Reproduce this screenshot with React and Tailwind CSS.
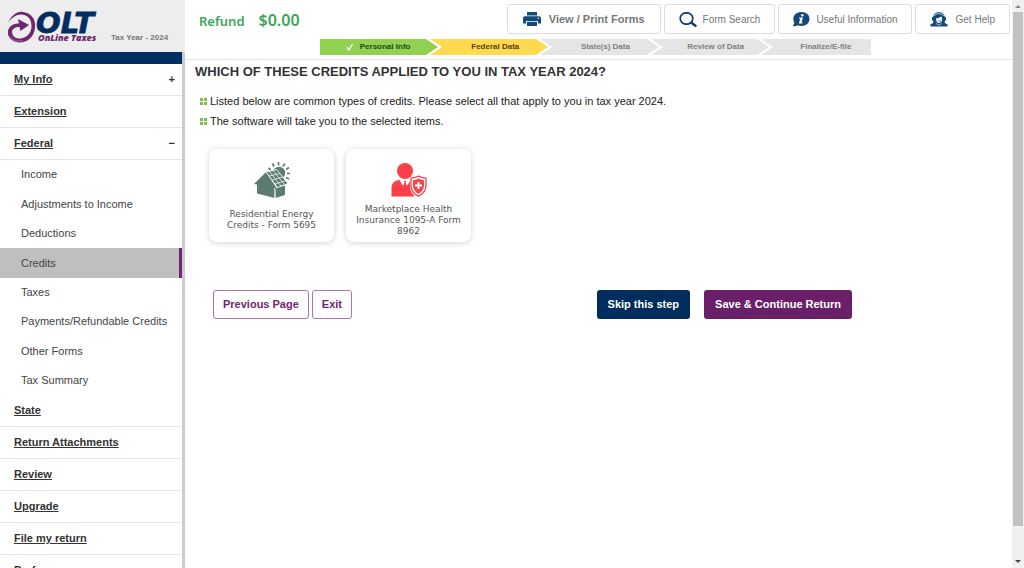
import React, { useState } from 'react';
import clsx from 'clsx';

const federalItems = [
  'Income',
  'Adjustments to Income',
  'Deductions',
  'Credits',
  'Taxes',
  'Payments/Refundable Credits',
  'Other Forms',
  'Tax Summary',
];

const lowerSections = [
  'State',
  'Return Attachments',
  'Review',
  'Upgrade',
  'File my return',
  'Preferences',
];

const steps = [
  { label: 'Personal Info', state: 'done' },
  { label: 'Federal Data', state: 'current' },
  { label: 'State(s) Data', state: 'todo' },
  { label: 'Review of Data', state: 'todo' },
  { label: 'Finalize/E-file', state: 'todo' },
];

const stepColors = {
  done: 'bg-[#92d050] text-[#1f4a1c] pl-1.5',
  current: 'bg-[#ffd94f] text-[#5a4300] pl-5',
  todo: 'bg-[#e5e5e5] text-[#808080] pl-5',
};

const stepFills = { done: '#92d050', current: '#ffd94f', todo: '#e5e5e5' };

/* Logo */
function Logo() {
  return (
    <svg viewBox="0 -6 96 44" className="w-24 h-11 shrink-0" role="img" aria-label="OLT OnLine Taxes">
      <path
        d="M1 13C5 4 11 1 16 2C25 3 29 10 28 18C27 28 19 33 12 32.5C5 32 0 27 1 21C2 16 6 13.5 12 13.5L11 9L22 15L13.5 21L12.5 17C8 17 5 19 5 22C5 26 9 29 13 28.5C19 28 24 24 24.5 17C25 10 21 5 15 4.5C10 4 5 7 1 13Z"
        fill="#702670"
      />
      <path d="M2.500 26C5 30.500 11 32 16 30.500" fill="none" stroke="#b784b6" strokeWidth="0.7" />
      <text x="29" y="23" fontFamily="DejaVu Sans, sans-serif" fontSize="29" fontWeight="700" fontStyle="italic" fill="#002d62" stroke="#002d62" strokeWidth="0.8">
        OLT
      </text>
      <text x="31" y="31" fontFamily="Open Sans, sans-serif" fontSize="9" fontWeight="800" fontStyle="italic" fill="#702670">
        OnLine Taxes
      </text>
    </svg>
  );
}

/* Toolbar icons */
function PrinterIcon() {
  return (
    <svg viewBox="0 0 18 14" className="w-[18px] h-[14px]" aria-hidden="true">
      <path
        fill="#134a7c"
        fillRule="evenodd"
        d="M4 0h10v3.400H4z M2 4.200h14A2 2 0 0 1 18 6.200V11.500h-3V9H3v2.500H0V6.200A2 2 0 0 1 2 4.200z M15.300 5.500a.7.7 0 1 0 0 1.400a.7.7 0 0 0 0-1.400z M4 9.800h10V14H4z"
      />
    </svg>
  );
}

function SearchIcon() {
  return (
    <svg viewBox="0 0 18 15" className="w-[18px] h-[15px]" fill="none" stroke="#12386b" aria-hidden="true">
      <ellipse cx="7.5" cy="6.5" rx="6.3" ry="5.7" strokeWidth="1.7" />
      <path d="M12.3 10.8L16.500 13.700" strokeWidth="2.400" strokeLinecap="round" />
    </svg>
  );
}

function InfoIcon() {
  return (
    <svg viewBox="0 0 18 15" className="w-[18px] h-[15px]" aria-hidden="true">
      <path fill="#134a7c" d="M9.5 0C14.5 0 17.5 3.2 17.5 7C17.5 11 14 14 9.5 14C8 14 6.8 13.7 5.8 13.2C4.5 14 2.5 14.4 0.5 14.2C1.5 13.2 2.2 12 2.3 10.7C1.6 9.6 1.3 8.4 1.3 7C1.3 3.2 4.5 0 9.5 0Z" />
      <circle cx="10.3" cy="3.2" r="1.3" fill="#fff" />
      <path fill="#fff" d="M7.3 5.6h3.600l-1.300 4.700h1l-.3 1.200H6.900l1.300-4.700h-1.200z" />
    </svg>
  );
}

function HelpIcon() {
  return (
    <svg viewBox="0 0 18 15" className="w-[18px] h-[15px]" aria-hidden="true">
      <path fill="#134a7c" d="M3.2 6C3.2 2.3 5.7 0.300 9 0.300S14.800 2.300 14.800 6V11L17.500 12.300V14.500H0.500V12.300L3.200 11Z" />
      <path fill="none" stroke="#fff" strokeWidth="0.700" d="M4.300 4C5.200 2.200 7 1.600 9 1.600s3.800.6 4.700 2.400" />
      <path fill="#fff" d="M6 6.200C8.500 6.500 10.500 5.500 11 4.300L12.200 6.400C12.200 9.200 11 10.900 9 10.900S6 9.200 6 6.200Z" />
      <path fill="#134a7c" d="M8.500 8.700h2.500v.8H8.500z" />
      <path fill="none" stroke="#fff" strokeWidth="0.600" d="M6 11.500L9 13.200L12 11.500" />
      <rect x="2" y="4.800" width="2" height="4" rx="1" fill="#134a7c" />
      <rect x="14" y="4.800" width="2" height="4" rx="1" fill="#134a7c" />
    </svg>
  );
}

/* Card icons */
function SolarHouseIcon() {
  return (
    <svg viewBox="0 0 36 36" className="size-9 shrink-0" aria-hidden="true">
      <path
        d="M24.5 3.500V0M20 4.500L18.500 1.500M16.800 7.800L14.500 6M29 4.500L30.800 1.500M32 7.500L35 5.500M33 11.500H36M32 15.500L35 17"
        stroke="#5c7b72"
        strokeWidth="1.700"
      />
      <circle cx="25" cy="11" r="6.200" fill="#5c7b72" />
      {/* walls and gable */}
      <path d="M0 22L12 10L22 25L20.500 36L3 31.500V22.500Z" fill="#5c7b72" />
      <path d="M21.500 26L31 23.500V33L21.500 36Z" fill="#5c7b72" />
      {/* roof with panels */}
      <path d="M12 10L22.500 7.500L34 21.500L23.500 25.500Z" fill="#5c7b72" stroke="#fff" strokeWidth="0.900" />
      <path d="M15.500 9.500L27 24M19 8.500L30.500 22.500M15 14L26 11.500M18 18L29 15M21 22L32 18.500" stroke="#fff" strokeWidth="0.700" />
      <path d="M20.800 26V36" stroke="#fff" strokeWidth="0.900" />
    </svg>
  );
}

function HealthInsuranceIcon() {
  return (
    <svg viewBox="0 0 36 36" className="size-9 shrink-0" aria-hidden="true">
      <circle cx="14" cy="9" r="8" fill="#fa4048" />
      <path fill="#fa4048" d="M0.5 34.5V26C0.500 21 3.500 18.500 8.500 18L12 24L13.500 20.500L12.800 18.800H15.200L14.500 20.500L16 24L19.500 18C21 18.200 22 18.500 23 19L23 34.500Z" />
      <path fill="#fff" d="M27.500 13L36 16V24C36 30 32.500 34 27.500 36C22.500 34 19 30 19 24V16.500Z" />
      <path fill="none" stroke="#fa4048" strokeWidth="1.300" d="M27.500 14.200C30 15.500 32.500 16.200 35 16.200V23.500C35 28.500 32 32 27.500 34.200C23 32 20 28.500 20 23.500V16.200C22.500 16.200 25 15.500 27.500 14.200Z" />
      <path fill="#fa4048" d="M27.500 16.500C29.500 17.600 31.200 18.100 33 18.300V23.500C33 27.200 31 30 27.500 31.900C24 30 22 27.200 22 23.500V18.300C23.800 18.100 25.500 17.600 27.500 16.500Z" />
      <path d="M27.500 20V27M24 23.500H31" stroke="#fff" strokeWidth="2" />
    </svg>
  );
}

const credits = [
  { label: 'Residential Energy Credits - Form 5695', icon: SolarHouseIcon },
  { label: 'Marketplace Health Insurance 1095-A Form 8962', icon: HealthInsuranceIcon },
];

function SectionLink({ label, sign }) {
  return (
    <a
      href="#"
      className="flex h-8 items-center justify-between border-b border-[#e6e6e6] pl-3.5 pr-[7px] text-[11px] font-bold text-[#333]"
    >
      <span className="underline">{label}</span>
      {sign && <span>{sign}</span>}
    </a>
  );
}

function Sidebar() {
  const [active, setActive] = useState('Credits');

  return (
    <aside className="flex w-[185px] shrink-0 flex-col">
      <div className="flex h-[52px] shrink-0 items-end gap-2 bg-[#ededed] pb-1 pl-[7px]">
        <Logo />
        <span className="whitespace-nowrap pb-1 text-[8px] leading-3 font-bold text-[#777]">Tax Year - 2024</span>
      </div>
      <div className="min-h-0 flex-1 overflow-hidden border-r-[3px] border-[#ccc]">
        <div className="h-3 bg-[#002d62]" />
        <nav>
          <SectionLink label="My Info" sign="+" />
          <SectionLink label="Extension" />
          <SectionLink label="Federal" sign="−" />
          <ul className="grid min-h-[235px] auto-rows-fr">
            {federalItems.map((item) => (
              <li key={item} className="flex">
                <a
                  href="#"
                  onClick={() => setActive(item)}
                  className={clsx(
                    'flex flex-1 items-center pl-[21px] text-[11px] text-[#444]',
                    active === item && 'border-r-[3px] border-[#702670] bg-[#bfbfbf]'
                  )}
                >
                  {item}
                </a>
              </li>
            ))}
          </ul>
          {lowerSections.map((label) => (
            <SectionLink key={label} label={label} />
          ))}
        </nav>
      </div>
    </aside>
  );
}

function ToolButton({ icon: Icon, className, children }) {
  return (
    <button
      type="button"
      className={clsx(
        'flex h-[30px] items-center whitespace-nowrap rounded-[3px] border border-[#ddd] bg-white text-[#777]',
        className
      )}
    >
      <Icon />
      <span>{children}</span>
    </button>
  );
}

function Steps() {
  return (
    <ol className="grid w-full max-w-[551px] grid-cols-5">
      {steps.map((step, i) => (
        <li
          key={step.label}
          className={clsx('relative flex h-4 items-center justify-center text-[8px] font-bold', stepColors[step.state])}
        >
          {step.state === 'done' && (
            <svg viewBox="0 0 8 8" className="mr-1.5 size-2" aria-hidden="true">
              <path d="M1 4.5L3 7L6.5 1" fill="none" stroke="#fff" strokeWidth="1.3" />
            </svg>
          )}
          {step.label}
          {i < steps.length - 1 && (
            <svg viewBox="0 0 16 16" className="absolute top-0 -right-3 z-10 h-4 w-4" aria-hidden="true">
              <path d="M0 0H4L16 8L4 16H0Z" fill="#fff" />
              <path d="M0 0L12 8L0 16Z" fill={stepFills[step.state]} />
            </svg>
          )}
        </li>
      ))}
    </ol>
  );
}

function Bullet() {
  return (
    <span className="grid size-[7px] grid-cols-2 grid-rows-2 gap-px" aria-hidden="true">
      <span className="bg-[#7cc142]" />
      <span className="bg-[#7cc142]" />
      <span className="bg-[#7cc142]" />
      <span className="bg-[#7cc142]" />
    </span>
  );
}

function CreditCard({ label, icon: Icon }) {
  const [selected, setSelected] = useState(false);

  return (
    <button
      type="button"
      aria-pressed={selected}
      onClick={() => setSelected(!selected)}
      className={clsx(
        'flex min-h-[93px] w-[125px] flex-col items-center rounded-lg bg-white px-1 pt-[13px] shadow-[0_1px_6px_rgba(0,0,0,0.18)]',
        selected && 'ring-1 ring-[#702670]'
      )}
    >
      <Icon />
      <span className="flex flex-1 items-center font-['DejaVu_Sans',sans-serif] text-[9px] leading-[11px] text-[#555]">
        {label}
      </span>
    </button>
  );
}

function Scrollbar() {
  return (
    <div className="flex w-3 shrink-0 flex-col items-center bg-[#f0f0f0]" aria-hidden="true">
      <svg viewBox="0 0 12 12" className="size-3">
        <path d="M3 8L6 5L9 8Z" fill="#888" />
      </svg>
      <div className="w-2.5 flex-1 bg-[#c1c1c1]" />
      <div className="flex h-[42px] items-end">
        <svg viewBox="0 0 12 12" className="size-3">
          <path d="M3 4L6 7L9 4Z" fill="#444" />
        </svg>
      </div>
    </div>
  );
}

function App() {
  return (
    <div className="flex h-screen overflow-hidden bg-white font-['Liberation_Sans',Arial,sans-serif]">
      <Sidebar />

      <div className="flex min-w-0 flex-1 flex-col">
        <header className="border-b border-[#e3e3e3] pt-1 pb-1">
          <div className="flex items-start justify-between pr-[2px] pl-3.5">
            <div className="flex items-baseline gap-3.5 pt-1 font-['Noto_Sans',sans-serif] font-semibold text-[#3aa657]">
              <span className="text-[13px] leading-6">Refund</span>
              <span className="text-[16px] leading-6">$0.00</span>
            </div>
            <div className="flex gap-[3px]">
              <ToolButton icon={PrinterIcon} className="gap-2 px-[15px] text-[11px] font-bold">
                View / Print Forms
              </ToolButton>
              <ToolButton icon={SearchIcon} className="gap-1.5 px-3.5 text-[10px]">
                Form Search
              </ToolButton>
              <ToolButton icon={InfoIcon} className="gap-1.5 px-[13px] text-[10px]">
                Useful Information
              </ToolButton>
              <ToolButton icon={HelpIcon} className="gap-2 px-3.5 text-[10px]">
                Get Help
              </ToolButton>
            </div>
          </div>
          <div className="mt-[5px] flex justify-center pr-1.5">
            <Steps />
          </div>
        </header>

        <main className="px-2.5 pt-1">
          <h1 className="text-[13px] leading-4 font-bold text-[#333]">
            WHICH OF THESE CREDITS APPLIED TO YOU IN TAX YEAR 2024?
          </h1>

          <ul className="pt-[11px] pl-[5px] text-[11px] leading-5 text-[#222]">
            <li className="flex items-center gap-[3px]">
              <Bullet />
              Listed below are common types of credits. Please select all that apply to you in tax year 2024.
            </li>
            <li className="flex items-center gap-[3px]">
              <Bullet />
              The software will take you to the selected items.
            </li>
          </ul>

          <div className="mt-[18px] flex gap-3 pl-3.5">
            {credits.map((credit) => (
              <CreditCard key={credit.label} {...credit} />
            ))}
          </div>

          <div className="mt-12 flex justify-between pr-[150px] pl-[18px] text-[11px] font-bold">
            <div className="flex gap-[3px]">
              <button type="button" className="h-[29px] rounded-[3px] border border-[#a878a8] px-[9px] text-[#702670]">
                Previous Page
              </button>
              <button type="button" className="h-[29px] rounded-[3px] border border-[#a878a8] px-[9px] text-[#702670]">
                Exit
              </button>
            </div>
            <div className="flex gap-3.5">
              <button type="button" className="h-[29px] rounded-[3px] bg-[#002d5b] px-[11px] text-white">
                Skip this step
              </button>
              <button type="button" className="h-[29px] rounded-[3px] bg-[#6a2068] px-[11px] text-white">
                Save &amp; Continue Return
              </button>
            </div>
          </div>
        </main>
      </div>

      <Scrollbar />
    </div>
  );
}

export default App;
